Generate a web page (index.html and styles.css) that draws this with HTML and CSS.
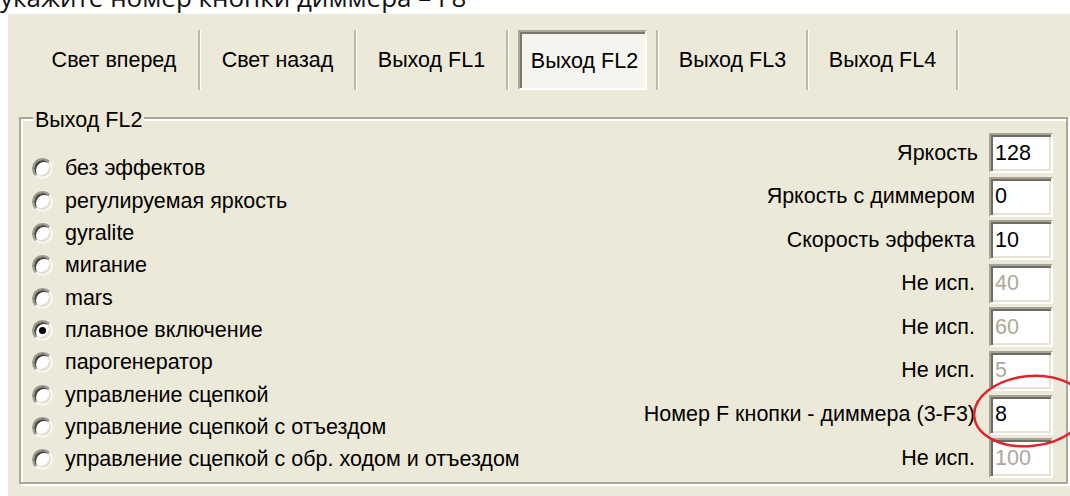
FILE: index.html
```html
<!DOCTYPE html>
<html lang="ru">
<head>
<meta charset="utf-8">
<title>Выход FL2</title>
<link rel="stylesheet" href="styles.css">
</head>
<body>
<div class="caption"><p>укажите номер кнопки диммера – F8</p></div>

<div class="panel">
  <div class="toolbar">
    <div class="tab tab-1">Свет вперед</div><div class="sep"></div>
    <div class="tab tab-2">Свет назад</div><div class="sep"></div>
    <div class="tab tab-3">Выход FL1</div><div class="sep"></div>
    <div class="tab tab-4 pressed"><span class="face">Выход FL2</span></div><div class="sep"></div>
    <div class="tab tab-4">Выход FL3</div><div class="sep"></div>
    <div class="tab tab-4">Выход FL4</div><div class="sep"></div>
  </div>

  <div class="group">
    <div class="legend">Выход FL2</div>
    <div class="content">
      <ul class="options">
        <li class="option"><span class="radio"></span>без эффектов</li>
        <li class="option"><span class="radio"></span>регулируемая яркость</li>
        <li class="option"><span class="radio"></span>gyralite</li>
        <li class="option"><span class="radio"></span>мигание</li>
        <li class="option"><span class="radio"></span>mars</li>
        <li class="option"><span class="radio checked"></span>плавное включение</li>
        <li class="option"><span class="radio"></span>парогенератор</li>
        <li class="option"><span class="radio"></span>управление сцепкой</li>
        <li class="option"><span class="radio"></span>управление сцепкой с отъездом</li>
        <li class="option"><span class="radio"></span>управление сцепкой с обр. ходом и отъездом</li>
      </ul>
      <div class="fields">
        <div class="field"><span class="label tight">Яркость</span><span class="input">128</span></div>
        <div class="field"><span class="label">Яркость с диммером</span><span class="input">0</span></div>
        <div class="field"><span class="label">Скорость эффекта</span><span class="input">10</span></div>
        <div class="field"><span class="label">Не исп.</span><span class="input disabled">40</span></div>
        <div class="field"><span class="label">Не исп.</span><span class="input disabled">60</span></div>
        <div class="field"><span class="label">Не исп.</span><span class="input disabled">5</span></div>
        <div class="field"><span class="label">Номер F кнопки - диммера (3-F3)</span><span class="input">8</span></div>
        <div class="field"><span class="label">Не исп.</span><span class="input disabled">100</span></div>
      </div>
    </div>
  </div>
</div>

<svg class="mark" width="110" height="85" viewBox="0 0 110 85">
  <ellipse cx="60" cy="41" rx="56" ry="35" transform="rotate(-6 60 41)" fill="none" stroke="#e1232c" stroke-width="2.5"/>
</svg>
</body>
</html>
```

FILE: styles.css
```css
body {
  margin: 0;
  width: 1070px;
  height: 496px;
  overflow: hidden;
  position: relative;
  background: #fff;
  font-family: "Liberation Sans", Arial, sans-serif;
}

/* heading line above the dialog, only its lower part is in view */
.caption {
  height: 14px;
  overflow: hidden;
  font-family: "Open Sans", sans-serif;
  font-size: 26px;
  color: #111;
}
.caption p {
  margin: -10px 0 0;
  line-height: 14px;
  white-space: nowrap;
}

/* dialog surface */
.panel {
  margin-left: 8px;
  height: 482px;
  box-sizing: border-box;
  padding: 16px 2px 0 11px;
  background: #ece9d8;
  font-size: 21.5px;
  color: #000;
}

/* toolbar of page buttons */
.toolbar {
  display: flex;
  height: 60px;
  margin-left: 11px;
}
.tab {
  flex: none;
  display: flex;
  align-items: center;
  justify-content: center;
  white-space: nowrap;
}
.tab-1 { width: 168px; }
.tab-2 { width: 153px; }
.tab-3 { width: 149px; }
.tab-4 { width: 147px; }
.sep {
  flex: none;
  width: 3px;
  box-sizing: border-box;
  border-left: 2px solid #bdbaac;
  border-right: 1px solid #fff;
}
.tab.pressed {
  align-items: stretch;
}
.tab.pressed .face {
  flex: 1;
  margin: 0 9px;
  display: flex;
  align-items: center;
  justify-content: center;
  padding: 3px 0 0 4px;
  border: 2px solid;
  border-color: #aaa798 #fff #fff #aaa798;
  box-shadow: inset 2px 2px 0 #7a786d;
  background: #f5f4ee;
}

/* group box */
.group {
  margin-top: 27px;
  height: 367px;
  box-sizing: border-box;
  border: 2px solid #aca899;
  box-shadow: inset 2px 2px 0 #fff, 2px 2px 0 #fff;
}
.legend {
  display: table;
  margin: -11px 0 0 12px;
  padding: 0 2px;
  line-height: 24px;
  background: #ece9d8;
}
.content {
  display: flex;
  justify-content: space-between;
  padding: 0 13px 0 11px;
}

/* radio list */
.options {
  list-style: none;
  margin: 20.8px 0 0;
  padding: 0;
}
.option {
  display: flex;
  align-items: center;
  gap: 12px;
  height: 32.33px;
  white-space: nowrap;
}
.radio {
  position: relative;
  flex: none;
  width: 21px;
  height: 21px;
  box-sizing: border-box;
  border-radius: 50%;
  border: 2px solid;
  border-color: #99978c #f7f6f2 #f7f6f2 #99978c;
  box-shadow: inset 2px 2px 0 #4a4944, inset -2px -2px 0 #e2dfd3;
  background: #fff;
}
.radio.checked::after {
  content: "";
  position: absolute;
  left: 5px;
  top: 5px;
  width: 7px;
  height: 7px;
  border-radius: 50%;
  background: #000;
}

/* value fields */
.fields {
  margin-top: 1px;
  display: flex;
  flex-direction: column;
  gap: 3.6px;
}
.field {
  display: flex;
  align-items: center;
  justify-content: flex-end;
  gap: 14px;
  height: 40px;
  white-space: nowrap;
}
.label.tight {
  margin-right: -3px;
}
.input {
  flex: none;
  width: 64px;
  height: 40px;
  box-sizing: border-box;
  display: flex;
  align-items: center;
  padding-left: 4px;
  border: 2px solid;
  border-color: #a7a496 #fff #fff #a7a496;
  box-shadow: inset 2px 2px 0 #6e6d65, inset -2px -2px 0 #e6e3d6;
  background: #fff;
}
.input.disabled {
  color: #aca899;
}

/* hand-drawn highlight around the dimmer field */
.mark {
  position: absolute;
  left: 970px;
  top: 370px;
  overflow: visible;
}
```
